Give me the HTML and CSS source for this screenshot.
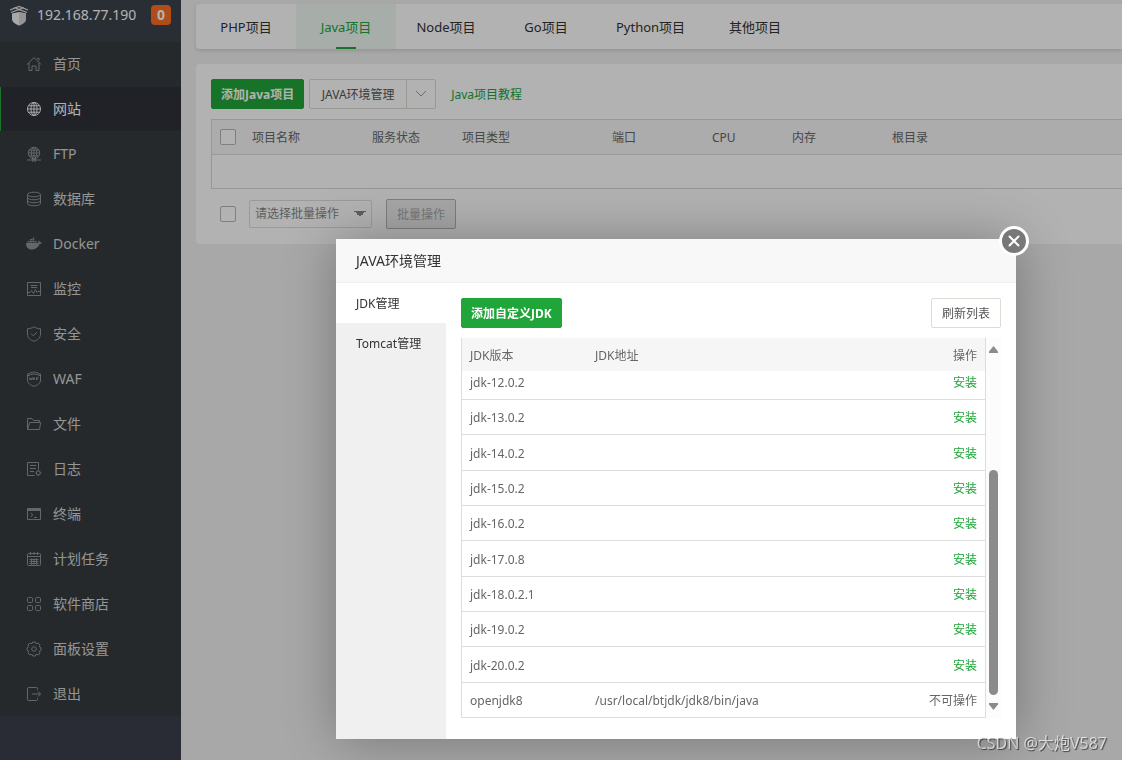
FILE: index.html
```html
<!DOCTYPE html>
<html lang="zh-CN">
<head>
<meta charset="utf-8">
<title>Java项目</title>
<link rel="stylesheet" href="styles.css">
</head>
<body>
<div class="app">
  <aside class="sidebar">
    <div class="brand">
      <svg class="brand-logo" viewBox="0 0 20 22" width="20" height="22"><path d="M3 9.500 10 8l7 1.500V15c0 3-3 5-7 6.500C6 20 3 18 3 15z" fill="#f2f2f2"/><path d="M10 8l7 1.500V15c0 3-3 5-7 6.500z" fill="#d4d4d4"/><path d="M1 6 10 2.500 19 6M2 8.500l8-3 8 3M5 3.500l9 3.500M15 3.500 6 7" fill="none" stroke="#e4e4e4" stroke-width="1.300"/></svg>
      <span class="brand-ip">192.168.77.190</span>
      <span class="brand-badge">0</span>
    </div>
    <nav class="menu">
      <a href="#" class="menu-item"><svg class="icon" viewBox="0 0 16 16"><path d="M1 8.500 8 1.500l7 7M3 7v7.500h3V10h4v4.500h3V7M11 2.500h2v2"/></svg>首页</a>
      <a href="#" class="menu-item active"><svg class="icon" viewBox="0 0 16 16"><circle cx="8" cy="8" r="6.500"/><ellipse cx="8" cy="8" rx="3" ry="6.500"/><path d="M8 1.500v13M1.500 8h13M2.500 4.800h11M2.500 11.200h11"/></svg>网站</a>
      <a href="#" class="menu-item"><svg class="icon" viewBox="0 0 16 16"><circle cx="8" cy="7" r="5.700"/><ellipse cx="8" cy="7" rx="2.700" ry="5.700"/><path d="M8 1.300v13M2.300 7h11.400M3 4.200h10M3 9.800h10M1 14h5M10 14h5"/><rect x="6.500" y="13.200" width="3" height="1.800"/></svg>FTP</a>
      <a href="#" class="menu-item"><svg class="icon" viewBox="0 0 16 16"><ellipse cx="8" cy="3.500" rx="6.500" ry="2.300"/><path d="M1.500 3.500v9c0 3 13 3 13 0v-9M1.500 6.500c0 3 13 3 13 0M1.500 9.500c0 3 13 3 13 0"/></svg>数据库</a>
      <a href="#" class="menu-item"><svg class="icon solid" viewBox="0 0 16 16"><path d="M0 7h12c.5-1 .2-2 .8-2.700.7.500 1 1.200 1 2 .8-.1 1.500 0 2 .4-.4.900-1.200 1.200-2.200 1.300C12 12 9 13.500 5.500 13.500 2 13.500 0 11 0 7z"/><path d="M1.500 4.900h2v1.700h-2zM3.900 4.900h2v1.700h-2zM6.300 4.900h2v1.700h-2zM8.700 4.900h2v1.700h-2zM3.900 3h2v1.600h-2zM6.300 3h2v1.600h-2zM6.800 1.500h1.500v1.200H6.800z"/></svg>Docker</a>
      <a href="#" class="menu-item"><svg class="icon" viewBox="0 0 16 16"><path d="M1.500 1.500h13v13h-13zM4.500 4.500h7M5 6.500h6M2 11.500h2l1.500-2 2 3 2-4 1.500 3 1-1H14"/></svg>监控</a>
      <a href="#" class="menu-item"><svg class="icon" viewBox="0 0 16 16"><path d="M8 .7c2 1.500 4.300 2 6.500 2V8c0 4-3 6-6.500 7.300C4.500 14 1.500 12 1.500 8V2.700c2.200 0 4.500-.5 6.500-2zM5 7.500l2.300 2.300L11 6"/></svg>安全</a>
      <a href="#" class="menu-item"><svg class="icon" viewBox="0 0 16 16"><path d="M1.500 5V3h1.800l1-1.300h2L8 .8l1.700.9h2l1 1.300h1.800v6c0 3.500-3 5.300-6.500 6.300C4.500 14.300 1.500 12.500 1.500 9zM1.500 5c4-2.500 9-2.500 13 0M3.500 6.500l.8 2.500L5 7l.7 2 .8-2.500M7 9l1-2.500L9 9M10.500 9V6.700h2M10.500 8H12"/></svg>WAF</a>
      <a href="#" class="menu-item"><svg class="icon" viewBox="0 0 16 16"><path d="M1.500 13.500v-11H6l1.500 2h6V6.500M1.500 13.500l2.300-7h10.900l-1.200 7z"/></svg>文件</a>
      <a href="#" class="menu-item"><svg class="icon" viewBox="0 0 16 16"><path d="M8.500 14.500h-7v-13h11v7M4 4.500h6M4 7.500h6M4 10.500h4"/><circle cx="12.300" cy="12" r="2"/><path d="M12.300 9v1M12.300 14v1M9.500 12h.8M14.300 12h1M10.300 10l.6.600M14.300 10l-.6.600M10.300 14l.6-.6M14.300 14l-.6-.6"/></svg>日志</a>
      <a href="#" class="menu-item"><svg class="icon" viewBox="0 0 16 16"><path d="M1.500 2.500h13v11h-13zM1.500 4.500h13M1.500 3.500h13M4.500 7l2.300 2-2.300 2M8 11.500h3"/></svg>终端</a>
      <a href="#" class="menu-item"><svg class="icon" viewBox="0 0 16 16"><rect x="1.500" y="2.500" width="13" height="12" rx="1"/><path d="M1.500 5.500h13M4.500 1v3M8 1v3M11.500 1v3M3.500 8.500h9M3.500 10.500h9M3.500 12.500h9M5.500 7.500v6M8 7.500v6M10.500 7.500v6"/></svg>计划任务</a>
      <a href="#" class="menu-item"><svg class="icon" viewBox="0 0 16 16"><rect x="1.500" y="1.500" width="5" height="5" rx="1"/><rect x="9.500" y="1.500" width="5" height="5" rx="1"/><rect x="1.500" y="9.500" width="5" height="5" rx="1"/><rect x="9.500" y="9.500" width="5" height="5" rx="1"/></svg>软件商店</a>
      <a href="#" class="menu-item"><svg class="icon" viewBox="0 0 16 16"><path d="M6.700 1h2.600l.7 1.700 2.300-.6 1.700 2-.6 1.800 1.600 1v2.200l-1.600 1 .6 1.800-1.700 2-2.300-.6L9.300 15H6.700L6 13.300l-2.300.6-1.700-2 .6-1.800L1 9.100V6.900l1.600-1L2 4.100l1.700-2 2.300.6z"/><circle cx="8" cy="8" r="2.300"/></svg>面板设置</a>
      <a href="#" class="menu-item"><svg class="icon" viewBox="0 0 16 16"><path d="M11.500 4V2.500a1 1 0 0 0-1-1h-8a1 1 0 0 0-1 1v11a1 1 0 0 0 1 1h8a1 1 0 0 0 1-1V12M6 8h8.500M12 5.500 14.500 8 12 10.500"/></svg>退出</a>
    </nav>
  </aside>

  <main class="main">
    <nav class="tabs">
      <a href="#" class="tab">PHP项目</a>
      <a href="#" class="tab current">Java项目</a>
      <a href="#" class="tab">Node项目</a>
      <a href="#" class="tab">Go项目</a>
      <a href="#" class="tab">Python项目</a>
      <a href="#" class="tab">其他项目</a>
    </nav>
    <section class="card">
      <div class="toolbar">
        <button type="button" class="btn primary">添加Java项目</button>
        <div class="split">
          <button type="button" class="split-main">JAVA环境管理</button>
          <button type="button" class="split-arrow" aria-label="展开"><svg viewBox="0 0 12 8" width="12" height="8"><path d="M1 1l5 5 5-5" fill="none" stroke="#999"/></svg></button>
        </div>
        <a href="#" class="help">Java项目教程</a>
      </div>
      <table class="projects">
        <thead>
          <tr>
            <th class="c-check"><input type="checkbox" class="check" aria-label="全选"></th>
            <th class="c-name">项目名称</th>
            <th class="c-state">服务状态</th>
            <th class="c-type">项目类型</th>
            <th class="c-port">端口</th>
            <th class="c-cpu">CPU</th>
            <th class="c-mem">内存</th>
            <th>根目录</th>
          </tr>
        </thead>
        <tbody><tr><td colspan="8"></td></tr></tbody>
      </table>
      <div class="batch">
        <input type="checkbox" class="check" aria-label="选择全部项目">
        <select class="batch-select" aria-label="批量操作"><option>请选择批量操作</option></select>
        <button type="button" class="btn batch-btn" disabled>批量操作</button>
      </div>
    </section>
  </main>
</div>

<div class="shade"></div>

<div class="modal" role="dialog" aria-labelledby="modal-title">
  <h2 class="modal-title" id="modal-title">JAVA环境管理</h2>
  <button type="button" class="close" aria-label="关闭"><svg viewBox="0 0 12 12" width="12" height="12"><path d="M1.500 1.500l9 9M10.500 1.500l-9 9" stroke="#fff" stroke-width="2" stroke-linecap="round"/></svg></button>
  <div class="modal-body">
    <nav class="side-tabs">
      <a href="#" class="side-tab current">JDK管理</a>
      <a href="#" class="side-tab">Tomcat管理</a>
    </nav>
    <div class="pane">
      <div class="pane-bar">
        <button type="button" class="btn primary">添加自定义JDK</button>
        <button type="button" class="btn plain">刷新列表</button>
      </div>
      <div class="list">
        <table class="jdk">
          <thead><tr><th class="c-ver">JDK版本</th><th>JDK地址</th><th class="c-op">操作</th></tr></thead>
          <tbody>
            <tr><td>jdk-12.0.2</td><td></td><td class="c-op"><a href="#">安装</a></td></tr>
            <tr><td>jdk-13.0.2</td><td></td><td class="c-op"><a href="#">安装</a></td></tr>
            <tr><td>jdk-14.0.2</td><td></td><td class="c-op"><a href="#">安装</a></td></tr>
            <tr><td>jdk-15.0.2</td><td></td><td class="c-op"><a href="#">安装</a></td></tr>
            <tr><td>jdk-16.0.2</td><td></td><td class="c-op"><a href="#">安装</a></td></tr>
            <tr><td>jdk-17.0.8</td><td></td><td class="c-op"><a href="#">安装</a></td></tr>
            <tr><td>jdk-18.0.2.1</td><td></td><td class="c-op"><a href="#">安装</a></td></tr>
            <tr><td>jdk-19.0.2</td><td></td><td class="c-op"><a href="#">安装</a></td></tr>
            <tr><td>jdk-20.0.2</td><td></td><td class="c-op"><a href="#">安装</a></td></tr>
            <tr><td>openjdk8</td><td>/usr/local/btjdk/jdk8/bin/java</td><td class="c-op">不可操作</td></tr>
          </tbody>
        </table>
        <div class="scroll">
          <svg viewBox="0 0 9 7" width="9" height="7"><path d="M4.500 0 9 5.500V7H0V5.500z" fill="#8b8b8b"/></svg>
          <div class="scroll-thumb"></div>
          <svg viewBox="0 0 9 7" width="9" height="7"><path d="M4.500 7 9 1.500V0H0v1.500z" fill="#8b8b8b"/></svg>
        </div>
      </div>
    </div>
  </div>
</div>
<div class="watermark">CSDN @大炮V587</div>
</body>
</html>
```
FILE: styles.css
```css
* { box-sizing: border-box; }
body {
  margin: 0;
  background: #f1f1f1;
  color: #666;
  font: 12px/18px "Noto Sans", "Noto Sans CJK SC", sans-serif;
  overflow: hidden;
}
a { color: #20a53a; text-decoration: none; }
button, select { font: inherit; }
table { border-collapse: separate; border-spacing: 0; width: 100%; }
th { font-weight: 400; text-align: left; }
th, td { padding: 2px 0 0; }

.app { display: flex; min-height: 100vh; }

.sidebar { flex: none; width: 181px; background: #3c404b; }
.brand {
  display: flex;
  align-items: center;
  height: 42px;
  padding: 0 10px 12px 9px;
  background: #3c424c;
}
.brand-logo { flex: none; }
.brand-ip { margin-left: 8px; color: #fff; font-size: 14px; }
.brand-badge {
  width: 20px;
  margin-left: auto;
  border-radius: 4px;
  background: #fc6d26;
  color: #fff;
  font-size: 14px;
  font-weight: 700;
  line-height: 20px;
  text-align: center;
}
.menu { display: flex; flex-direction: column; gap: 1px; background: #353c40; }
.menu-item {
  display: flex;
  align-items: center;
  gap: 11px;
  height: 44px;
  padding-left: 25px;
  border-left: 1px solid transparent;
  color: #d6d6d6;
  font-size: 14px;
}
.menu-item.active { border-left-color: #20a53a; background: #2e3138; color: #fff; }
.icon { width: 16px; height: 16px; fill: none; stroke: #929292; }
.icon.solid { fill: #929292; stroke: none; }
.active .icon { stroke: #f5f5f5; }

.main { flex: 1; min-width: 0; padding: 4px 0 0 15px; }
.tabs {
  display: flex;
  height: 45px;
  border-radius: 4px 0 0 4px;
  background: #fff;
  box-shadow: 0 2px 4px rgba(0, 0, 0, .12);
}
.tab {
  min-width: 100px;
  padding: 0 20px;
  color: #333;
  font-size: 13px;
  line-height: 46px;
  text-align: center;
}
.tab.current {
  height: 45px;
  background: linear-gradient(#20a53a, #20a53a) center bottom / 20px 2px no-repeat #eff8f1;
  color: #20a53a;
}
.card { margin-top: 15px; padding: 15px 0 15px 15px; border-radius: 4px 0 0 4px; background: #fff; }
.toolbar { display: flex; align-items: center; }
.btn { height: 30px; padding: 2px 9px 0; border: 1px solid #d9d9d9; border-radius: 2px; white-space: nowrap; }
.btn.primary { border-color: #20a53a; background: #20a53a; color: #fff; font-weight: 700; }
.btn.plain { padding: 2px 10px 0; border-color: #dcdcd4; background: #fff; color: #555; }
.split { display: flex; height: 30px; margin: 0 15px 0 5px; border: 1px solid #dcdcd4; border-radius: 2px; }
.split button { border: 0; background: none; color: #555; }
.split .split-main { width: 96px; padding: 2px 0 0; }
.split .split-arrow { width: 29px; padding: 0; border-left: 1px solid #dcdcd4; }
.help { padding-top: 2px; }

.check {
  appearance: none;
  width: 16px;
  height: 16px;
  margin: 0;
  border: 1px solid #b8b8b8;
  border-radius: 2px;
  background: #fff;
}
.projects { margin-top: 10px; border: 1px solid #d8d8d8; border-right: 0; table-layout: fixed; }
.projects th { height: 35px; border-bottom: 1px solid #ddd; background: #f6f6f6; }
.projects td { height: 33px; }
.projects .check { display: block; margin-left: 8px; }
.projects .c-check { width: 40px; padding: 0; }
.c-name { width: 120px; }
.c-state { width: 90px; }
.c-type { width: 150px; }
.c-port { width: 100px; }
.c-cpu { width: 80px; }
.c-mem { width: 100px; }
.batch { display: flex; align-items: center; margin-top: 10px; padding-left: 9px; }
.batch-select {
  appearance: none;
  width: 123px;
  height: 28px;
  margin: 0 14px 0 13px;
  padding: 0 5px;
  border: 1px solid #ddd;
  border-radius: 2px;
  background-color: #fff;
  background-image:
    linear-gradient(to bottom left, #888 50%, transparent 50%),
    linear-gradient(to bottom right, #888 50%, transparent 50%);
  background-position: 104px 10px, 110px 10px;
  background-repeat: no-repeat;
  background-size: 6px 6px;
  color: #888;
}
.batch .batch-btn { width: 70px; border-color: #b4b4b4; background: #eee; color: #aaa; }

.shade { position: fixed; inset: 0; background: rgba(0, 0, 0, .3); }

.modal {
  position: absolute;
  top: 239px;
  left: 336px;
  display: flex;
  flex-direction: column;
  width: 680px;
  background: #fff;
  box-shadow: 1px 1px 50px rgba(0, 0, 0, .3);
}
.modal-title {
  margin: 0;
  padding: 0 20px;
  border-bottom: 1px solid #eee;
  background: #f8f8f8;
  color: #333;
  font-size: 14px;
  font-weight: 400;
  line-height: 43px;
}
.close {
  position: absolute;
  top: -13px;
  right: -13px;
  display: grid;
  place-items: center;
  width: 30px;
  height: 30px;
  padding: 0;
  border: 3px solid #fff;
  border-radius: 50%;
  background: #787878;
}
.modal-body { display: flex; }
.side-tabs { flex: none; width: 110px; background: #f0f0f0; }
.side-tab { display: block; height: 40px; padding-left: 20px; color: #333; line-height: 42px; }
.side-tab.current { background: #fff; }
.pane { flex: 1; padding: 15px 15px 21px; }
.pane-bar { display: flex; justify-content: space-between; }
.list { display: flex; margin-top: 10px; }
.jdk { flex: 1; border: solid #ddd; border-width: 0 1px; }
.jdk th { height: 33px; background: #f6f6f6; }
.jdk td { height: 35px; border-bottom: 1px solid #ddd; }
.jdk tr:nth-child(3n) td { height: 36px; }
.jdk tbody tr:first-child td { height: 29px; padding-bottom: 6px; }
.jdk th, .jdk td { padding-left: 8px; padding-right: 8px; }
.jdk .c-ver { width: 125px; }
.jdk .c-op { width: 100px; text-align: right; }
.scroll {
  display: flex;
  flex-direction: column;
  align-items: center;
  width: 15px;
  padding: 8px 0;
  background: #fcfcfc;
}
.scroll-thumb { width: 9px; height: 225px; margin: auto 0 8px; border-radius: 5px; background: #8b8b8b; }

.watermark {
  position: absolute;
  right: 15px;
  bottom: 5px;
  color: rgba(255, 255, 255, .65);
  font-size: 16px;
  line-height: 24px;
  text-shadow: 1px 1px 1px rgba(0, 0, 0, .6);
}
```
